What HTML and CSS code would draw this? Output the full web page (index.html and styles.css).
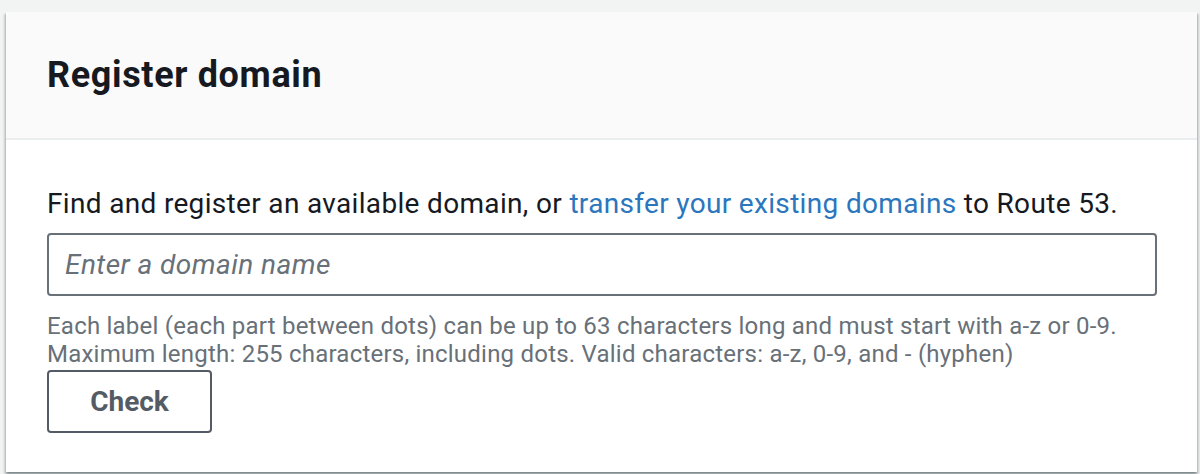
FILE: index.html
```html
<!DOCTYPE html>
<html lang="en">
<head>
<meta charset="utf-8">
<title>Register domain</title>
<link rel="stylesheet" href="styles.css">
</head>
<body>
<section class="card">
  <header class="card-header">
    <h2 class="card-title">Register domain</h2>
  </header>
  <div class="card-body">
    <p class="intro">Find and register an available domain, or <a class="link" href="#">transfer your existing domains</a> to Route 53.</p>
    <input class="domain-input" type="text" placeholder="Enter a domain name">
    <p class="hint">Each label (each part between dots) can be up to 63 characters long and must start with a-z or 0-9.<br>Maximum length: 255 characters, including dots. Valid characters: a-z, 0-9, and - (hyphen)</p>
    <button class="btn" type="button">Check</button>
  </div>
</section>
</body>
</html>
```
FILE: styles.css
```css
html, body {
  margin: 0;
  padding: 0;
  background: #f2f3f3;
  height: 100%;
}
body {
  font-family: Roboto, "Liberation Sans", sans-serif;
  color: #16191f;
  padding: 12px 3px 0 6px;
  box-sizing: border-box;
  overflow: hidden;
}
.card {
  background: #ffffff;
  box-shadow: 0 2px 2px 0 rgba(0, 28, 36, 0.3), 2px 2px 2px 0 rgba(0, 28, 36, 0.15), -2px 2px 2px 0 rgba(0, 28, 36, 0.15);
  height: 460px;
  display: flex;
  flex-direction: column;
}
.card-header {
  flex-shrink: 0;
  background: #fafafa;
  border-bottom: 2px solid #eaeded;
  height: 128px;
  box-sizing: border-box;
  display: flex;
  align-items: center;
  padding: 0 40px 0 41px;
}
.card-title {
  margin: 0;
  font-size: 36px;
  font-weight: 700;
  line-height: 44px;
  letter-spacing: 0.65px;
  color: #16191f;
}
.card-body {
  padding: 44px 40px 40px 41px;
  display: flex;
  flex-direction: column;
  align-items: flex-start;
}
.intro {
  margin: 0 0 9px;
  font-size: 28px;
  line-height: 40px;
  letter-spacing: 0.33px;
}
.link {
  color: #2b76bd;
  text-decoration: none;
}
.domain-input {
  box-sizing: border-box;
  flex-shrink: 0;
  width: 1110px;
  height: 63px;
  margin: 0;
  border: 2px solid #687078;
  border-radius: 4px;
  padding: 0 16px;
  font-family: inherit;
  font-size: 28px;
  letter-spacing: 0.45px;
  background: #fff;
  color: #16191f;
}
.domain-input::placeholder {
  color: #687078;
  font-style: italic;
  opacity: 1;
}
.hint {
  margin: 16px 0 2px;
  font-size: 24px;
  line-height: 28px;
  letter-spacing: 0.22px;
  color: #687078;
}
.btn {
  box-sizing: border-box;
  flex-shrink: 0;
  width: 165px;
  height: 63px;
  border: 2px solid #545b64;
  border-radius: 4px;
  background: #fff;
  color: #545b64;
  font-family: inherit;
  font-size: 28px;
  font-weight: 700;
  padding: 0;
}
```
